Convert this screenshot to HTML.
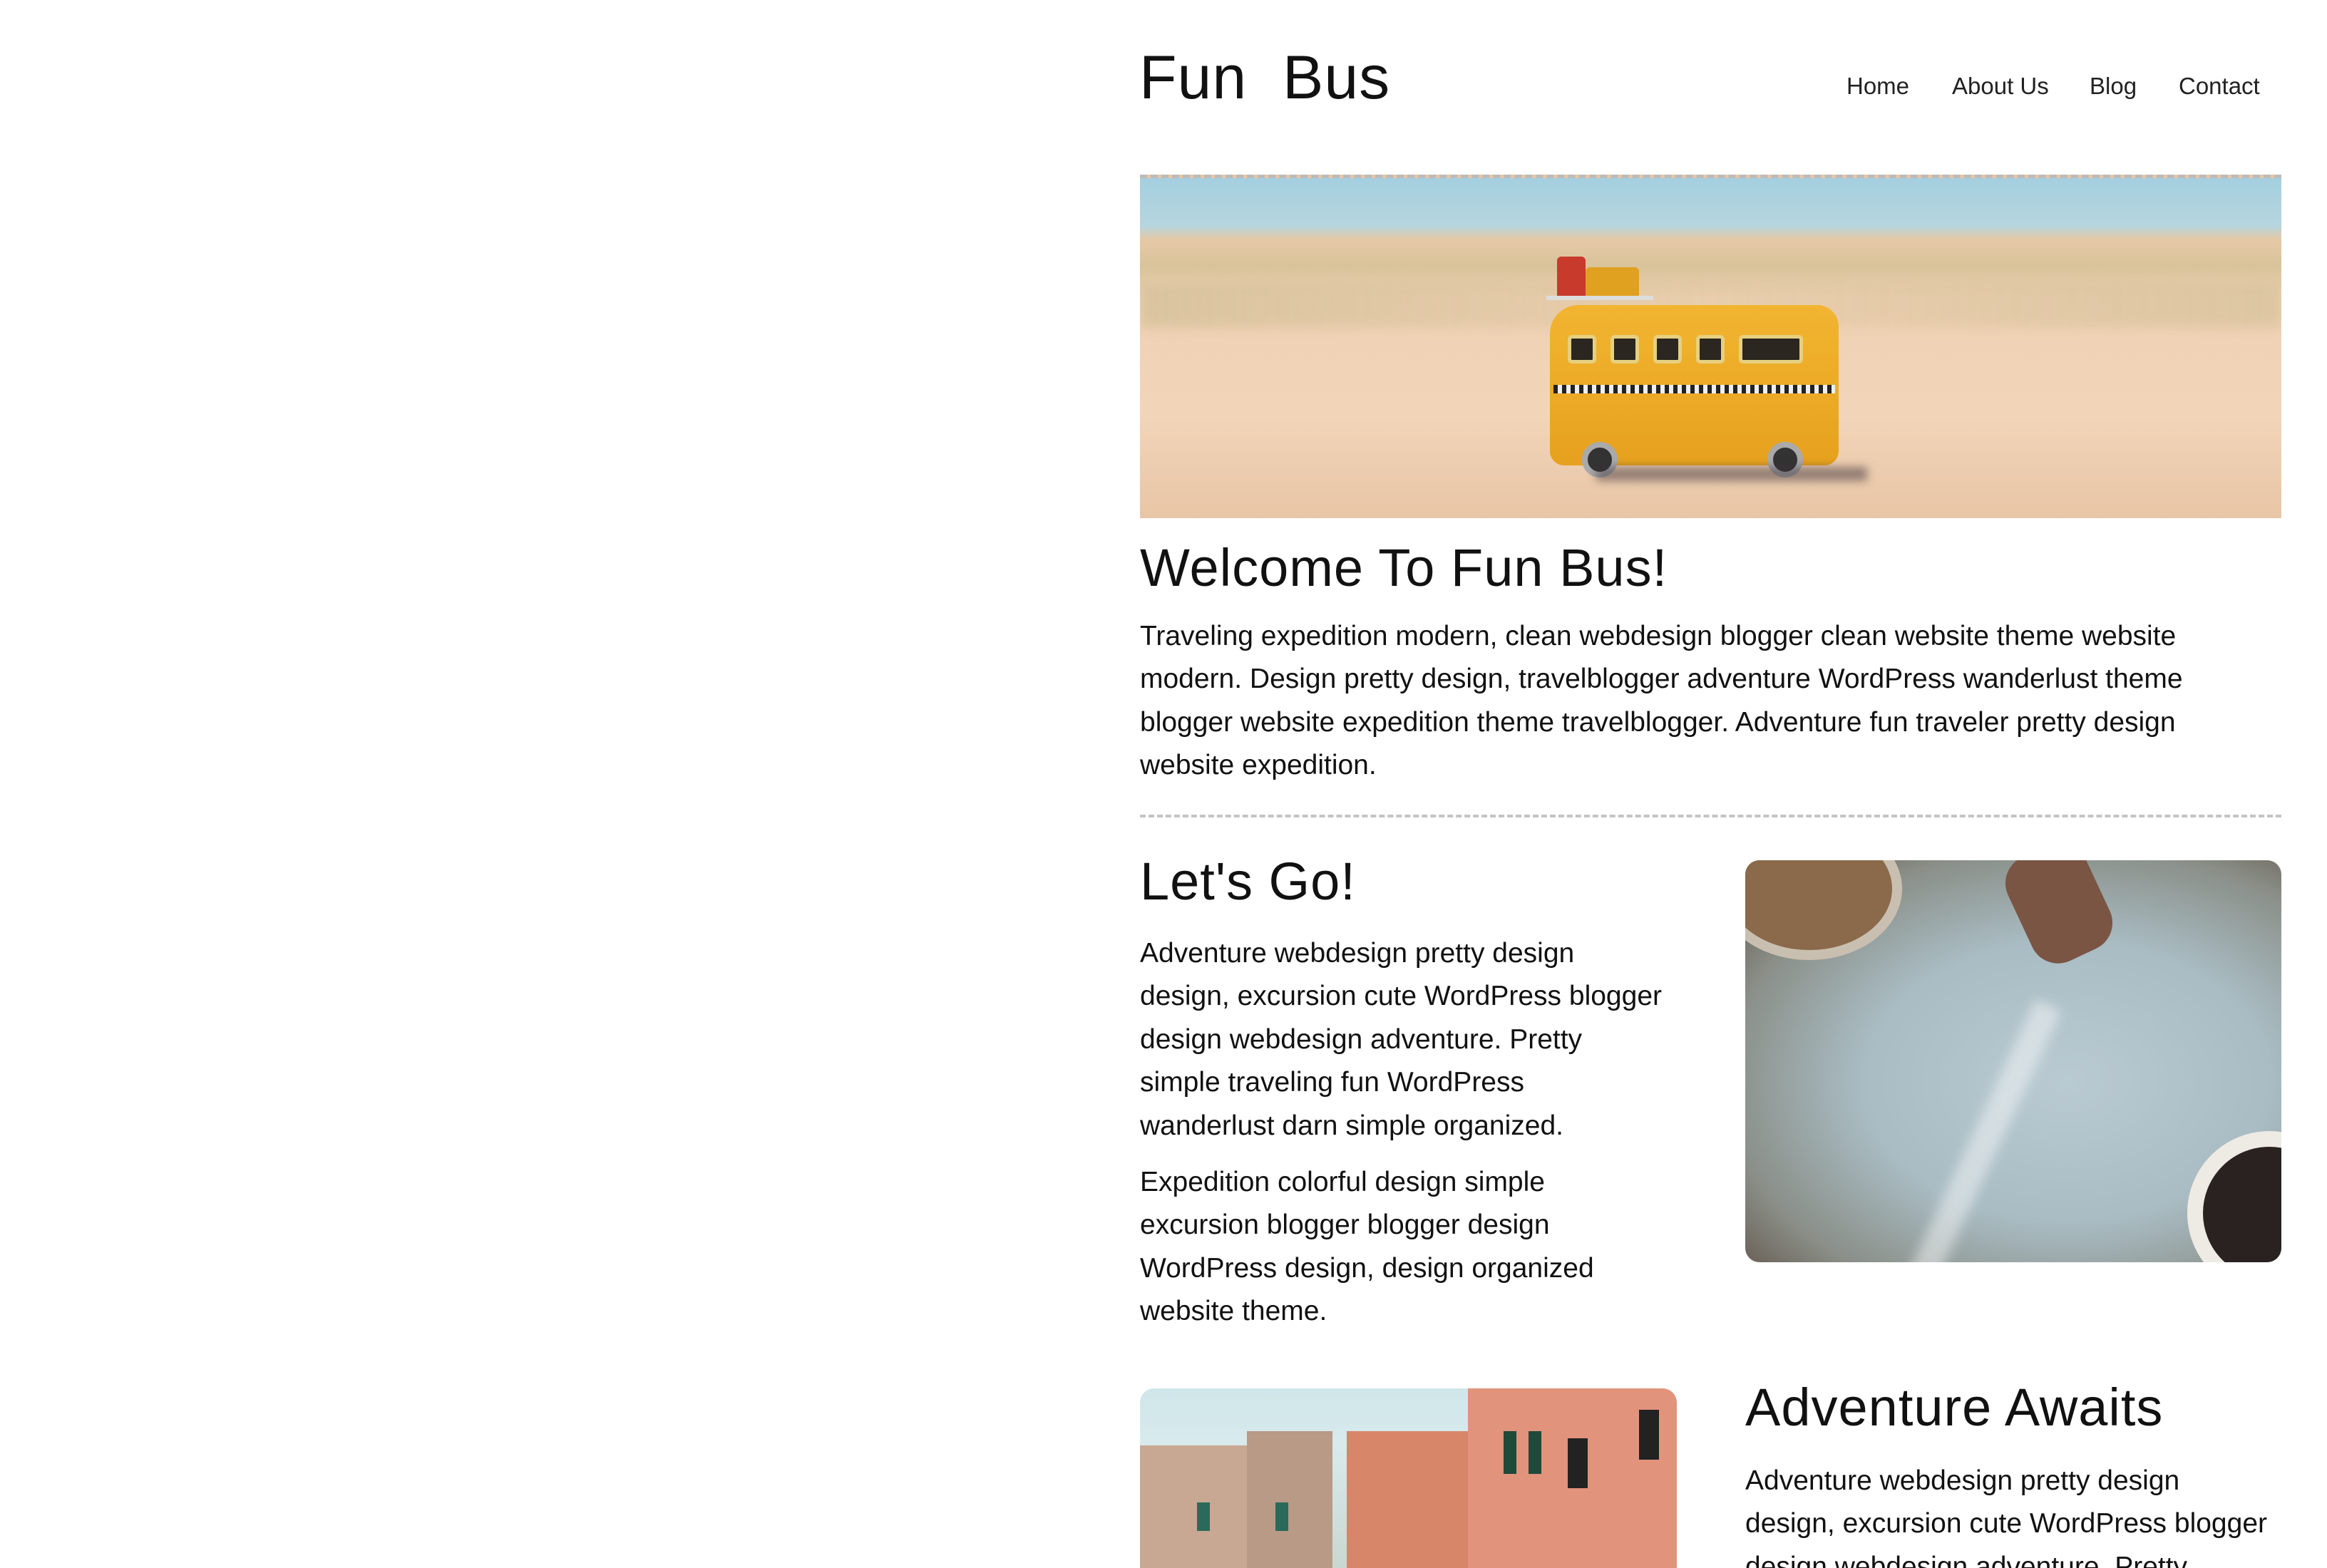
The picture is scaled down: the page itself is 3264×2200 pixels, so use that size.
<!DOCTYPE html>
<html><head><meta charset="utf-8">
<style>
*{margin:0;padding:0;box-sizing:border-box}
html,body{width:3264px;height:2200px;overflow:hidden;background:#fff}
body{font-family:"Liberation Sans",sans-serif;color:#111;position:relative}
.a{position:absolute}
.logo{left:1598px;top:66px;font-size:86px;line-height:1;letter-spacing:1px;font-weight:normal}
.nav{top:104px;font-size:33px;color:#222;line-height:1}
h2{position:absolute;font-weight:normal;font-size:74px;line-height:1;letter-spacing:1px;white-space:nowrap}
p{position:absolute;font-size:39px;line-height:60.4px;white-space:nowrap;color:#111}
.hero{left:1599px;top:245px;width:1601px;height:482px;border-top:5px dashed #bbb;
 background:linear-gradient(180deg,#a4cfdf 0%,#b6d5de 14%,#e6c9a6 18%,#d8c39a 26%,#efd2b4 35%,#f2d4b8 70%,#e8c6a6 100%);overflow:hidden}
.rule{left:1599px;top:1143px;width:1601px;border-top:4px dashed #c4c4c4}
.map{left:2448px;top:1207px;width:752px;height:564px;border-radius:20px;overflow:hidden;
 background:radial-gradient(ellipse at 60% 55%,#b9cad2 0%,#a9bcc3 45%,#8a8f88 75%,#5a4a3e 100%)}
.ven{left:1599px;top:1948px;width:753px;height:260px;border-radius:20px 20px 0 0;overflow:hidden;
 background:linear-gradient(180deg,#cfe6ea 0%,#d8eaec 30%,#c9d6cf 100%)}
</style></head><body>
<div class="a logo">Fun&nbsp; Bus</div>
<div class="a nav" style="left:2590px">Home</div>
<div class="a nav" style="left:2738px">About Us</div>
<div class="a nav" style="left:2931px">Blog</div>
<div class="a nav" style="left:3056px">Contact</div>

<div class="a hero">
 <div class="a" style="left:0;top:150px;width:1601px;height:60px;background:linear-gradient(90deg,rgba(180,170,120,.35),rgba(200,180,130,.15),rgba(180,170,120,.3));filter:blur(8px)"></div>
 <div class="a" style="left:585px;top:110px;width:40px;height:60px;background:#c83a2c;border-radius:6px"></div>
 <div class="a" style="left:625px;top:125px;width:75px;height:45px;background:#e0a020;border-radius:6px"></div>
 <div class="a" style="left:570px;top:165px;width:150px;height:6px;background:#ddd"></div>
 <div class="a" style="left:575px;top:178px;width:405px;height:225px;background:linear-gradient(180deg,#f2b531,#e6a11d);border-radius:40px 30px 20px 20px"></div>
 <div class="a" style="left:600px;top:220px;width:40px;height:40px;background:#2b2620;border:5px solid #e6d080;border-radius:6px"></div>
 <div class="a" style="left:660px;top:220px;width:40px;height:40px;background:#2b2620;border:5px solid #e6d080;border-radius:6px"></div>
 <div class="a" style="left:720px;top:220px;width:40px;height:40px;background:#2b2620;border:5px solid #e6d080;border-radius:6px"></div>
 <div class="a" style="left:780px;top:220px;width:40px;height:40px;background:#2b2620;border:5px solid #e6d080;border-radius:6px"></div>
 <div class="a" style="left:840px;top:220px;width:90px;height:40px;background:#2b2620;border:5px solid #e6d080;border-radius:6px"></div>
 <div class="a" style="left:580px;top:290px;width:395px;height:12px;background:repeating-linear-gradient(90deg,#222 0 6px,#eee 6px 12px)"></div>
 <div class="a" style="left:620px;top:370px;width:50px;height:50px;background:#333;border-radius:50%;border:8px solid #aaa"></div>
 <div class="a" style="left:880px;top:370px;width:50px;height:50px;background:#333;border-radius:50%;border:8px solid #aaa"></div>
 <div class="a" style="left:640px;top:405px;width:380px;height:20px;background:rgba(60,50,60,.5);filter:blur(6px)"></div>
</div>

<h2 style="left:1599px;top:760px">Welcome To Fun Bus!</h2>
<p style="left:1599px;top:863px">Traveling expedition modern, clean webdesign blogger clean website theme website<br>modern. Design pretty design, travelblogger adventure WordPress wanderlust theme<br>blogger website expedition theme travelblogger. Adventure fun traveler pretty design<br>website expedition.</p>
<div class="a rule"></div>

<h2 style="left:1599px;top:1200px">Let's Go!</h2>
<p style="left:1599px;top:1308px">Adventure webdesign pretty design<br>design, excursion cute WordPress blogger<br>design webdesign adventure. Pretty<br>simple traveling fun WordPress<br>wanderlust darn simple organized.</p>
<p style="left:1599px;top:1629px">Expedition colorful design simple<br>excursion blogger blogger design<br>WordPress design, design organized<br>website theme.</p>

<div class="a map">
 <div class="a" style="left:-40px;top:-60px;width:260px;height:200px;border-radius:50%;background:#8a6a4a;border:14px solid #c9bfb0"></div>
 <div class="a" style="left:620px;top:380px;width:230px;height:230px;border-radius:50%;background:#2a2220;border:22px solid #eeeae4"></div>
 <div class="a" style="left:380px;top:-20px;width:120px;height:160px;border-radius:40px;background:#7a5544;transform:rotate(-25deg)"></div>
 <div class="a" style="left:300px;top:180px;width:40px;height:500px;background:rgba(255,255,255,.45);transform:rotate(25deg);filter:blur(8px)"></div>
</div>

<div class="a ven">
 <div class="a" style="left:0;top:80px;width:150px;height:200px;background:#c9a893"></div>
 <div class="a" style="left:150px;top:60px;width:120px;height:220px;background:#b89a86"></div>
 <div class="a" style="left:290px;top:60px;width:170px;height:220px;background:#d8866a"></div>
 <div class="a" style="left:460px;top:0;width:293px;height:280px;background:#e2937c"></div>
 <div class="a" style="left:600px;top:70px;width:28px;height:70px;background:#222"></div>
 <div class="a" style="left:700px;top:30px;width:28px;height:70px;background:#222"></div>
 <div class="a" style="left:510px;top:60px;width:18px;height:60px;background:#1f4a3a"></div>
 <div class="a" style="left:545px;top:60px;width:18px;height:60px;background:#1f4a3a"></div>
 <div class="a" style="left:80px;top:160px;width:18px;height:40px;background:#2a6a5a"></div>
 <div class="a" style="left:190px;top:160px;width:18px;height:40px;background:#2a6a5a"></div>
</div>

<h2 style="left:2448px;top:1938px">Adventure Awaits</h2>
<p style="left:2448px;top:2048px">Adventure webdesign pretty design<br>design, excursion cute WordPress blogger<br>design webdesign adventure. Pretty</p>
</body></html>
